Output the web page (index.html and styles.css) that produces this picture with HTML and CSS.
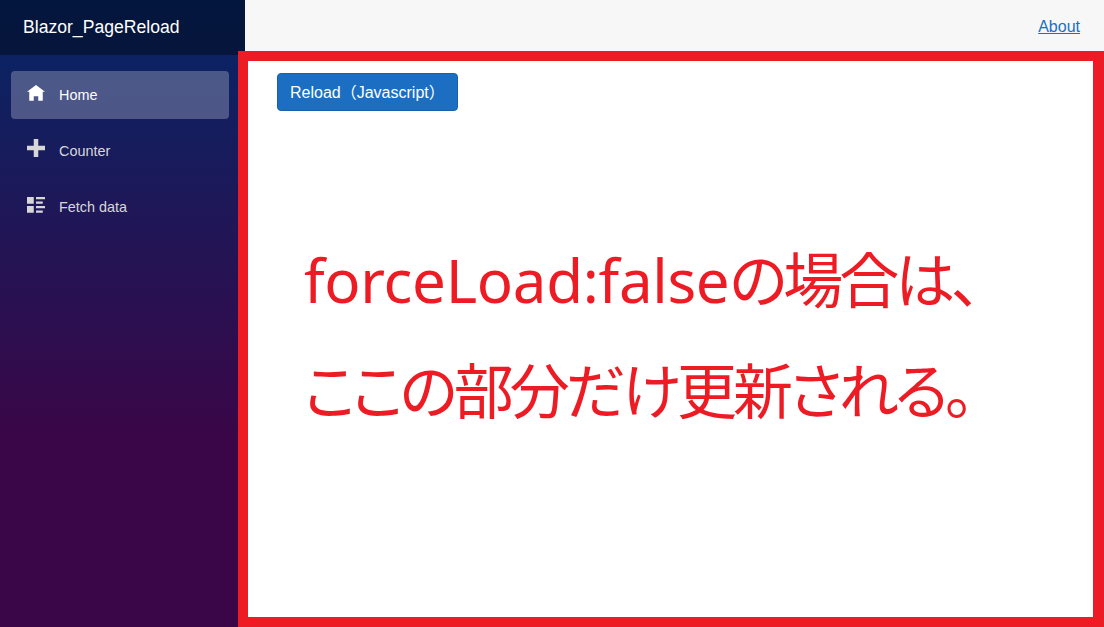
FILE: index.html
```html
<!DOCTYPE html>
<html lang="ja">
<head>
<meta charset="utf-8">
<title>Blazor_PageReload</title>
<link rel="stylesheet" href="styles.css">
</head>
<body>
<div class="page">
  <aside class="sidebar">
    <div class="brand-row"><a class="brand" href="#">Blazor_PageReload</a></div>
    <nav class="nav">
      <a class="nav-link active" href="#"><svg class="icon" viewBox="0 0 8 8"><path d="M4 0l-4 3h1v4h2v-2h2v2h2v-4.03l1 .03-4-3z"/></svg>Home</a>
      <a class="nav-link" href="#"><svg class="icon icon-plus" viewBox="0 0 8 8"><path d="M3 0v3h-3v2h3v3h2v-3h3v-2h-3v-3h-2z"/></svg>Counter</a>
      <a class="nav-link" href="#"><svg class="icon" viewBox="0 0 8 8"><path d="M0 0v3h3v-3h-3zm4 0v1h4v-1h-4zm0 2v1h3v-1h-3zm-4 2v3h3v-3h-3zm4 0v1h4v-1h-4zm0 2v1h3v-1h-3z"/></svg>Fetch data</a>
    </nav>
  </aside>
  <main class="main">
    <div class="top-row"><a class="about" href="#">About</a></div>
    <div class="content"><button class="btn" type="button">Reload（Javascript）</button></div>
  </main>
</div>
<div class="callout">
  <p class="callout-text">forceLoad:false<span class="jp">の場合は、</span><br><span class="jp">ここの部分だけ更新される。</span></p>
</div>
</body>
</html>
```
FILE: styles.css
```css
html, body {
  margin: 0;
  height: 100%;
  overflow: hidden;
  font-family: "Liberation Sans", "Noto Sans CJK JP", sans-serif;
}
.page {
  display: flex;
  height: 627px;
}
.sidebar {
  width: 245px;
  flex: none;
  background-image: linear-gradient(180deg, rgb(5, 39, 103) 0%, #3a0647 70%);
}
.brand-row {
  height: 55px;
  display: flex;
  align-items: center;
  padding-left: 23px;
  background: rgba(0, 0, 0, 0.4);
}
.brand {
  color: #fff;
  font-size: 17.6px;
  text-decoration: none;
}
.nav {
  display: flex;
  flex-direction: column;
  gap: 8px;
  padding: 16px 16px 0 11px;
}
.nav-link {
  display: flex;
  align-items: center;
  height: 48px;
  padding-left: 16px;
  border-radius: 4px;
  color: #d7d7d7;
  font-size: 14.4px;
  text-decoration: none;
}
.nav-link.active {
  background: rgba(255, 255, 255, 0.25);
  color: #fff;
}
.icon {
  width: 18px;
  height: 18px;
  margin-right: 14px;
  margin-top: -2px;
  fill: currentColor;
}
.icon-plus {
  margin-top: -6px;
}
.main {
  flex: 1;
  min-width: 0;
}
.top-row {
  height: 55px;
  display: flex;
  align-items: center;
  justify-content: flex-end;
  padding-right: 24px;
  background: #f7f7f7;
}
.about {
  color: #1b6ec2;
  font-size: 16px;
  margin-top: -1px;
}
.content {
  padding: 18px 32px 0;
}
.btn {
  height: 38px;
  width: 181px;
  padding: 0 12px 2px;
  text-align: left;
  white-space: nowrap;
  border: 1px solid #1861ac;
  border-radius: 4px;
  background: #1b6ec2;
  color: #fff;
  font: 16px "Liberation Sans", "Noto Sans CJK JP", sans-serif;
}
.callout {
  position: absolute;
  left: 238px;
  top: 51px;
  right: 0;
  bottom: 0;
  box-sizing: border-box;
  border: solid #ed1c24;
  border-width: 10px 11px 10px 10px;
  display: flex;
  padding: 164px 0 0 56px;
  pointer-events: none;
}
.callout-text {
  margin: 0;
  color: #ed1c24;
  font: 60px/111px "Noto Sans", "Noto Sans CJK JP", sans-serif;
  letter-spacing: -0.3px;
  white-space: nowrap;
}
.jp {
  font-feature-settings: "palt";
  letter-spacing: -4px;
}
```
